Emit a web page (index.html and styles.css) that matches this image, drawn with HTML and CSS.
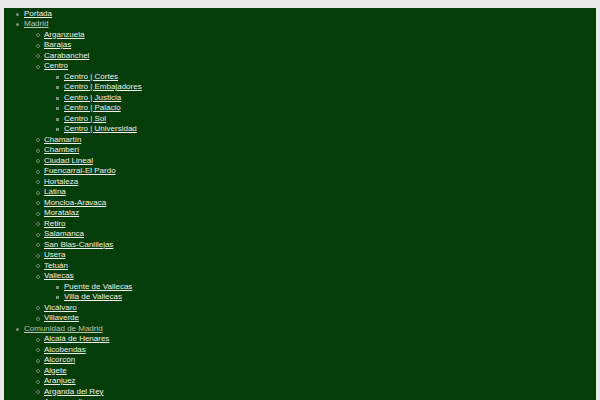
FILE: index.html
```html
<!DOCTYPE html>
<html lang="es">
<head>
<meta charset="utf-8">
<title>Mapa del sitio</title>
<link rel="stylesheet" href="styles.css">
</head>
<body>
<div class="box">
<ul class="l1">
  <li><a href="#">Portada</a></li>
  <li><a class="v" href="#">Madrid</a>
    <ul class="l2">
      <li><a href="#">Arganzuela</a></li>
      <li><a href="#">Barajas</a></li>
      <li><a href="#">Carabanchel</a></li>
      <li><a href="#">Centro</a>
        <ul class="l3">
          <li><a href="#">Centro | Cortes</a></li>
          <li><a href="#">Centro | Embajadores</a></li>
          <li><a href="#">Centro | Justicia</a></li>
          <li><a href="#">Centro | Palacio</a></li>
          <li><a href="#">Centro | Sol</a></li>
          <li><a href="#">Centro | Universidad</a></li>
        </ul>
      </li>
      <li><a href="#">Chamartín</a></li>
      <li><a href="#">Chamberí</a></li>
      <li><a href="#">Ciudad Lineal</a></li>
      <li><a href="#">Fuencarral-El Pardo</a></li>
      <li><a href="#">Hortaleza</a></li>
      <li><a href="#">Latina</a></li>
      <li><a href="#">Moncloa-Aravaca</a></li>
      <li><a href="#">Moratalaz</a></li>
      <li><a href="#">Retiro</a></li>
      <li><a href="#">Salamanca</a></li>
      <li><a href="#">San Blas-Canillejas</a></li>
      <li><a href="#">Usera</a></li>
      <li><a href="#">Tetuán</a></li>
      <li><a href="#">Vallecas</a>
        <ul class="l3">
          <li><a href="#">Puente de Vallecas</a></li>
          <li><a href="#">Villa de Vallecas</a></li>
        </ul>
      </li>
      <li><a href="#">Vicálvaro</a></li>
      <li><a href="#">Villaverde</a></li>
    </ul>
  </li>
  <li><a class="v" href="#">Comunidad de Madrid</a>
    <ul class="l2">
      <li><a href="#">Alcalá de Henares</a></li>
      <li><a href="#">Alcobendas</a></li>
      <li><a href="#">Alcorcón</a></li>
      <li><a href="#">Algete</a></li>
      <li><a href="#">Aranjuez</a></li>
      <li><a href="#">Arganda del Rey</a></li>
      <li><a href="#">Arroyomolinos</a></li>
      <li><a href="#">Boadilla del Monte</a></li>
    </ul>
  </li>
</ul>
</div>
</body>
</html>
```
FILE: styles.css
```css
html, body {
  background: #e9e9e9;
}
body {
  margin: 8px 4px 0 4px;
  font-family: "Liberation Sans", Arial, sans-serif;
  font-size: 8px;
  line-height: 10.5px;
}
.box {
  background: #053d09;
  min-height: 500px;
  padding-top: 0.5px;
}
ul {
  margin: 0;
  padding-left: 20px;
  list-style: none;
}
li {
  position: relative;
}
li::before {
  content: "";
  position: absolute;
  left: -8px;
  top: 4px;
  width: 3px;
  height: 3px;
  box-sizing: border-box;
  background: #7f937f;
}
.l1 > li::before {
  border-radius: 50%;
}
.l2 > li::before {
  top: 3.5px;
  width: 4px;
  height: 4px;
  background: transparent;
  border: 1px solid #6f856f;
  border-radius: 50%;
}
.l3 > li::before {
  background: #7a907a;
}
a {
  color: #eef2ee;
  text-decoration: underline;
}
a.v {
  color: #b9c6b9;
}
```
